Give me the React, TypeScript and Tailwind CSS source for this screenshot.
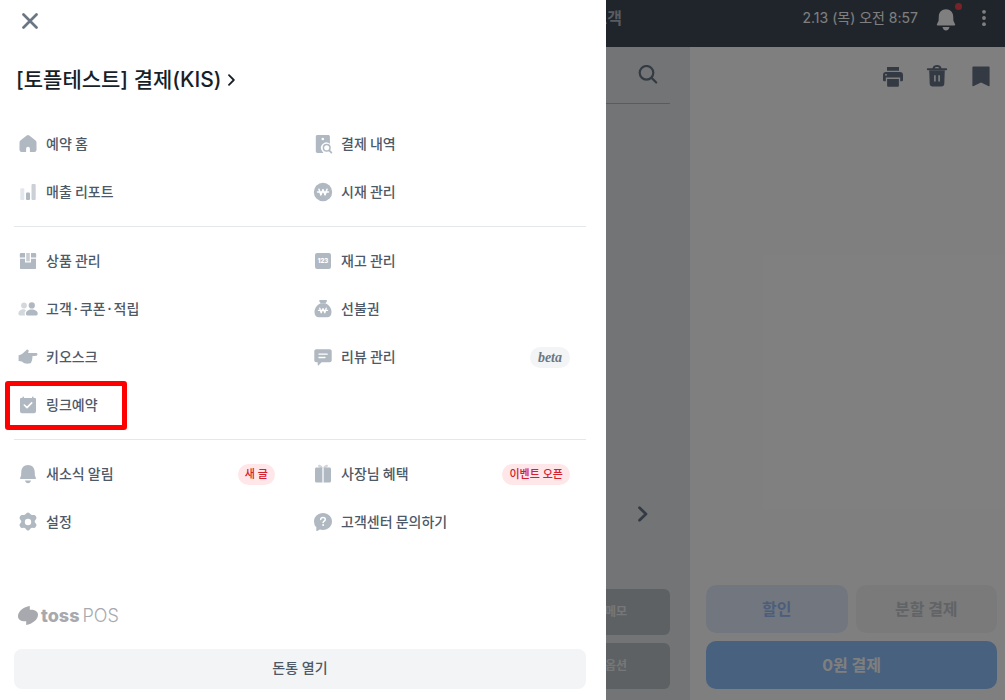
import type { ReactNode } from "react";
import clsx from "clsx";

type Badge = { label: string; tone: "red" | "beta" };
type MenuItem = { label: string; icon: ReactNode; badge?: Badge; marked?: boolean };

function Glyph({ children }: { children: ReactNode }) {
  return (
    <svg viewBox="0 0 20 20" className="size-5 shrink-0 fill-[#b0b8c1]" aria-hidden="true">
      {children}
    </svg>
  );
}

const HomeIcon = (
  <Glyph>
    <path d="M8.7 1.6a2.2 2.2 0 0 1 2.6 0l6 4.6c.8.6 1.2 1.4 1.2 2.4v7.2a2.2 2.2 0 0 1-2.2 2.2h-4.400v-3.300a1.900 1.900 0 0 0-3.800 0V18H3.700a2.200 2.200 0 0 1-2.200-2.200V8.600c0-1 .4-1.800 1.200-2.400z" />
  </Glyph>
);

const ReportIcon = (
  <Glyph>
    <rect x="2.300" y="6.300" width="4" height="11.700" rx="1" fill="#e3e6ea" />
    <rect x="8" y="10.400" width="4" height="7.600" rx="1" />
    <rect x="13.500" y="2" width="4.200" height="16" rx="1" fill="#cbd0d6" />
  </Glyph>
);

const HistoryIcon = (
  <Glyph>
    <path d="M4.500 1h10.700c1 0 1.700.7 1.700 1.700v7.100a5.400 5.400 0 0 0-7.700 7.500l1.200 1.700H4.500c-1 0-1.700-.7-1.700-1.700V2.700C2.800 1.700 3.500 1 4.500 1z" />
    <circle cx="9.800" cy="5" r="1.300" fill="#fff" />
    <circle cx="13.700" cy="13.800" r="3.300" fill="#fff" stroke="#b0b8c1" strokeWidth="1.500" />
    <path d="m16.200 16.300 2.200 2.300" stroke="#b0b8c1" strokeWidth="1.700" strokeLinecap="round" />
  </Glyph>
);

const CashIcon = (
  <Glyph>
    <circle cx="10" cy="10" r="9.200" />
    <path
      d="m6 7.200 1.900 5.700L10 7.600l2.100 5.300L14 7.200M4.500 10h11"
      fill="none"
      stroke="#fff"
      strokeWidth="1.500"
      strokeLinecap="round"
      strokeLinejoin="round"
    />
  </Glyph>
);

const ProductIcon = (
  <Glyph>
    <path d="M2.500 2H7v4.600H1.800V3zM13 2h4.500l.7 1v3.600H13z" />
    <path d="M8.200 2h3.600v8.300H8.200z" fill="#c8ced5" />
    <path d="M2 7.800h5v3.800h6V7.800h5v9.500c0 .4-.3.7-.7.7H2.700a.7.7 0 0 1-.7-.7z" />
  </Glyph>
);

const CustomerIcon = (
  <Glyph>
    <g fill="#d3d8dd">
      <circle cx="6" cy="6.500" r="2.900" />
      <path d="M6.600 10.400c-3.500-.3-6.200 1.500-6.200 4.300 0 1 .6 1.700 1.600 1.700h5.200c-1-1.600-.7-3.700.9-5.200z" />
    </g>
    <circle cx="13.800" cy="6.400" r="3.100" />
    <path d="M13.800 10.600c3.400 0 5.900 1.800 5.900 4.200 0 1-.6 1.700-1.600 1.700H9.500c-1 0-1.600-.7-1.600-1.700 0-2.400 2.500-4.200 5.900-4.200z" />
  </Glyph>
);

const KioskIcon = (
  <Glyph>
    <path d="M.6 8.200c1.800-.1 3-.8 4.300-1.900l3.600-3.400c1-.9 2.500.1 2.100 1.400l-.5 1.700h8c1.800 0 1.800 2.700.1 2.800l-4.100.4c.5.5.6 1.100.1 1.700.4.600.3 1.200-.2 1.700.3.700.1 1.300-.5 1.700 0 1.400-.9 2.200-2.300 2.300-3 .3-5.600-.2-7.200-2.100L.6 14z" />
  </Glyph>
);

const ReservationIcon = (
  <Glyph>
    <path d="M3.200 3h1.200V2c0-.8 1.500-.8 1.500 0v1h8.200V2c0-.8 1.500-.8 1.500 0v1h1.200c.7 0 1.200.5 1.200 1.200v12.100c0 1.200-.9 2-2 2H4c-1.200 0-2-.8-2-2V4.200C2 3.500 2.500 3 3.200 3z" />
    <path
      d="m6.300 10 2.700 2.600 4.700-4.700"
      fill="none"
      stroke="#fff"
      strokeWidth="1.600"
      strokeLinecap="round"
      strokeLinejoin="round"
    />
  </Glyph>
);

const StockIcon = (
  <Glyph>
    <rect x="2" y="2" width="16" height="16" rx="2.200" />
    <text
      x="10"
      y="12.400"
      textAnchor="middle"
      fill="#fff"
      className="font-['Inter'] text-[6px] font-black"
    >
      123
    </text>
  </Glyph>
);

const PrepaidIcon = (
  <Glyph>
    <path d="M6.200 1.600c0-.4.3-.7.700-.7h6.400c.4 0 .7.3.700.7 0 1.300-.8 1.900-1.600 2.700h-4.600c-.8-.8-1.600-1.400-1.600-2.700z" />
    <path d="M7.600 4.300h4.900c3.500 1.500 6 4.900 6 8.600 0 3.300-1.700 5.300-4.500 5.300H6c-2.800 0-4.500-2-4.500-5.300 0-3.700 2.500-7.100 6.100-8.600z" />
    <path
      d="m6.800 9.200 1.400 4.600L10 9.600l1.800 4.200 1.400-4.600M5.500 11.400h9"
      fill="none"
      stroke="#fff"
      strokeWidth="1.300"
      strokeLinecap="round"
      strokeLinejoin="round"
    />
  </Glyph>
);

const ReviewIcon = (
  <Glyph>
    <path d="M3.300 2.200h13.400c1.200 0 2 .9 2 2v9c0 1.200-.8 2-2 2H8.600l-2.900 3c-.4.400-1 .2-1-.4v-2.600H3.300c-1.200 0-2-.8-2-2v-9c0-1.100.8-2 2-2z" />
    <path d="M6 7.200h8.200M6 10.500h6" stroke="#fff" strokeWidth="1.300" strokeLinecap="round" />
  </Glyph>
);

const BellIcon = (
  <Glyph>
    <path d="M10 1c3.900 0 6.500 2.800 6.700 6.500l.2 4 1 2.600c.2.600-.1 1-.7 1H2.800c-.6 0-.9-.4-.7-1l1-2.600.2-4C3.500 3.800 6.100 1 10 1zM7 16.500h6c-.3 1.600-1.500 2.700-3 2.700s-2.700-1.100-3-2.700z" />
  </Glyph>
);

const BenefitIcon = (
  <Glyph>
    <path d="M10 4C7.400 3.900 5.400 3.300 5.100 1.900 4.900.8 6.200.5 7.200 1 8.500 1.500 9.500 2.800 10 4c.5-1.200 1.500-2.500 2.800-3 1-.5 2.300-.2 2.100.900C14.600 3.300 12.600 3.900 10 4z" fill="#d1d6db" />
    <path d="M9 3.500H3.500c-.9 0-1.500.6-1.500 1.500v12c0 .9.600 1.500 1.500 1.500H9zM11 3.500h5.500c.9 0 1.500.6 1.500 1.500v12c0 .9-.6 1.500-1.500 1.500H11z" />
    <path d="M9 3.500h2v15H9z" fill="#e1e4e8" />
  </Glyph>
);

const GearIcon = (
  <Glyph>
    <path
      fillRule="evenodd"
      d="M8.700 1.100a2 2 0 0 1 2.600 0l1.500 1.500c.3.300.8.500 1.200.5l2.100-.1c.7 0 1.300.4 1.600 1l.6 1.100c.3.600.2 1.300-.2 1.800l-1.200 1.800c-.3.500-.3 1 0 1.500l1.200 1.800c.4.600.5 1.200.2 1.800l-.7 1.200c-.3.600-.9.900-1.500.9l-2.100-.1c-.5 0-.9.200-1.200.5l-1.500 1.600a2 2 0 0 1-2.600 0l-1.500-1.600c-.3-.3-.8-.5-1.200-.5l-2.100.1c-.7 0-1.200-.3-1.500-.9l-.7-1.200c-.3-.6-.2-1.200.2-1.800l1.200-1.800c.3-.5.3-1 0-1.500L1.900 6.900c-.4-.5-.5-1.200-.2-1.800L2.400 4c.3-.6.8-1 1.500-1l2.100.1c.4 0 .9-.2 1.200-.5zM10 6.800a3.200 3.200 0 1 0 0 6.400 3.200 3.200 0 0 0 0-6.400z"
    />
  </Glyph>
);

const HelpIcon = (
  <Glyph>
    <path d="M10 1.100c5 0 9 3.600 9 8.400s-4 8.400-9 8.400c-1.100 0-2.200-.2-3.200-.5l-2.600 1.500c-.6.300-1.100 0-1-.6l.2-2.800A8.200 8.200 0 0 1 1 9.500c0-4.800 4-8.400 9-8.400z" />
    <path
      d="M7.700 7.500c.1-1.300 1-2 2.300-2s2.300.8 2.300 1.900c0 1.600-2.200 1.700-2.200 3.200"
      fill="none"
      stroke="#fff"
      strokeWidth="1.500"
      strokeLinecap="round"
    />
    <circle cx="10.100" cy="13" r="1" fill="#fff" />
  </Glyph>
);

// null keeps a grid cell empty
const SECTIONS: (MenuItem | null)[][] = [
  [
    { label: "예약 홈", icon: HomeIcon },
    { label: "결제 내역", icon: HistoryIcon },
    { label: "매출 리포트", icon: ReportIcon },
    { label: "시재 관리", icon: CashIcon },
  ],
  [
    { label: "상품 관리", icon: ProductIcon },
    { label: "재고 관리", icon: StockIcon },
    { label: "고객·쿠폰·적립", icon: CustomerIcon },
    { label: "선불권", icon: PrepaidIcon },
    { label: "키오스크", icon: KioskIcon },
    { label: "리뷰 관리", icon: ReviewIcon, badge: { label: "beta", tone: "beta" } },
    { label: "링크예약", icon: ReservationIcon, marked: true },
    null,
  ],
  [
    { label: "새소식 알림", icon: BellIcon, badge: { label: "새 글", tone: "red" } },
    { label: "사장님 혜택", icon: BenefitIcon, badge: { label: "이벤트 오픈", tone: "red" } },
    { label: "설정", icon: GearIcon },
    { label: "고객센터 문의하기", icon: HelpIcon },
  ],
];

function MenuBadge({ badge }: { badge: Badge }) {
  return (
    <span
      className={clsx(
        "ml-auto flex h-[21px] items-center rounded-full",
        badge.tone === "red"
          ? "bg-[#ffe7e9] px-[7px] text-[11px] font-medium text-[#d22030]"
          : "bg-[#f2f4f6] px-2 font-['Liberation_Serif',serif] text-[14px] font-bold text-[#6b7684] italic",
      )}
    >
      {badge.label}
    </span>
  );
}

function MenuButton({ item }: { item: MenuItem }) {
  return (
    <button type="button" className="relative flex h-12 w-full items-center gap-2 pr-4 pl-1 text-left">
      {item.icon}
      <span className="pb-[2px] font-['Noto_Sans_CJK_KR',sans-serif] text-[14px] leading-5 font-medium text-[#4e5968]">
        {item.label}
      </span>
      {item.badge && <MenuBadge badge={item.badge} />}
      {item.marked && (
        <span className="absolute top-0 -left-[9px] h-[49px] w-[122px] rounded-[3px] border-5 border-[#ff0000]" />
      )}
    </button>
  );
}

function Drawer() {
  return (
    <aside className="absolute inset-y-0 left-0 flex w-[606px] max-w-full flex-col bg-white pr-5 pb-[11px] pl-[14px]">
      <div className="flex h-[42px] items-center pl-2">
        <button type="button" aria-label="닫기">
          <svg viewBox="0 0 16 16" className="size-4" fill="none" stroke="#6b7684" strokeWidth="2.700" strokeLinecap="round">
            <path d="m1.500 1.500 13 13M14.500 1.500l-13 13" />
          </svg>
        </button>
      </div>

      <button type="button" className="mt-5 flex h-9 items-center gap-1.5 self-start pl-[2px]">
        <span className="text-[21px] font-medium text-[#191f28]">[토플테스트] 결제(KIS)</span>
        <svg viewBox="0 0 7 12" className="h-3 w-[7px]" fill="none" stroke="#191f28" strokeWidth="1.800" strokeLinecap="round" strokeLinejoin="round">
          <path d="m1 1.200 4.800 4.800L1 10.800" />
        </svg>
      </button>

      <nav className="mt-[22px]">
        {SECTIONS.map((items, index) => (
          <ul
            key={index}
            className={clsx(
              "grid grid-cols-2 gap-x-[18px]",
              index > 0 && "mt-[10px] border-t border-[#e5e8eb] pt-[10px]",
            )}
          >
            {items.map((item, i) => (
              <li key={item?.label ?? i}>{item && <MenuButton item={item} />}</li>
            ))}
          </ul>
        ))}
      </nav>

      <div className="mt-auto mb-[22px] flex h-6 items-center gap-[3px] pl-1 text-[18px] text-[#a7a9ae]">
        <svg viewBox="0 0 20 19" className="h-[19px] w-5" fill="currentColor" aria-hidden="true">
          <path d="M11.800 0v3.800C16 3.400 20 4.800 20 8.800c0 5-5.700 9.200-11.800 10.200v-3.800C4 15.600 0 14.200 0 10.200 0 5.200 5.700 1 11.800 0z" />
        </svg>
        <span className="font-extrabold">toss</span>
        <span className="font-light">POS</span>
      </div>

      <button type="button" className="h-10 rounded-lg bg-[#f2f4f6] pb-[2px] text-[14px] leading-5 font-medium text-[#4e5968]">
        돈통 열기
      </button>
    </aside>
  );
}

function TopBar() {
  return (
    <header className="flex h-[47px] shrink-0 items-start justify-between bg-[#414a57] pr-4 text-white">
      <nav className="flex h-9 w-[622px] items-center justify-end text-[16px] font-bold text-[#b0b8c1]">고객</nav>
      <div className="flex h-9 items-center">
        <time className="text-[14px] leading-5">2.13 (목) 오전 8:57</time>
        <button type="button" aria-label="알림" className="relative mt-1 ml-[18px]">
          <svg viewBox="0 0 20 22" className="h-[22px] w-5" fill="currentColor">
            <path d="M10 .3c4.300 0 7 3 7.200 7l.2 4.500 1.700 3.400c.3.700 0 1.200-.7 1.200H1.600c-.7 0-1-.5-.7-1.200l1.700-3.400.2-4.500C3 3.300 5.700.3 10 .3zM6.500 18h7c-.3 1.900-1.700 3.400-3.500 3.400S6.800 19.900 6.500 18z" />
          </svg>
          <span className="absolute -top-1.5 -right-1.5 size-[7px] rounded-full bg-[#f04452]" />
        </button>
        <button type="button" aria-label="더보기" className="ml-[23px]">
          <svg viewBox="0 0 10 20" className="h-5 w-[10px]" fill="currentColor">
            <circle cx="5" cy="3.800" r="1.900" />
            <circle cx="5" cy="10" r="1.900" />
            <circle cx="5" cy="16.200" r="1.900" />
          </svg>
        </button>
      </div>
    </header>
  );
}

function CartPanel() {
  return (
    <section className="flex flex-1 flex-col items-end bg-[#e5e8eb] pr-5 pb-[11px]">
      <label className="flex h-[57px] w-full items-center border-b border-[#b0b8c1] pr-3">
        <input type="search" aria-label="검색" className="min-w-0 flex-1 bg-transparent outline-none" />
        <svg viewBox="0 0 20 20" className="size-5" fill="none" stroke="#677587" strokeWidth="2.200" strokeLinecap="round">
          <circle cx="8.500" cy="7.800" r="6.800" />
          <path d="m13.600 12.900 4.600 4.600" />
        </svg>
      </label>
      <button type="button" aria-label="다음" className="mt-auto mr-[21px]">
        <svg viewBox="0 0 12 16" className="h-4 w-3" fill="none" stroke="#677587" strokeWidth="2.700" strokeLinecap="round" strokeLinejoin="round">
          <path d="m2.500 1.700 6.500 6.300-6.500 6.300" />
        </svg>
      </button>
      <div className="mt-[67px] flex w-[108px] flex-col gap-2 text-[12px] font-bold text-[#eceef0]">
        <button type="button" className="h-[46px] rounded-md bg-[#bac2c6]">메모</button>
        <button type="button" className="h-[46px] rounded-md bg-[#bac2c6]">옵션</button>
      </div>
    </section>
  );
}

function PaymentPanel() {
  return (
    <section className="flex w-[315px] flex-col justify-between bg-white pt-[18px] pr-2 pb-[11px] pl-4 text-[#677587]">
      <div className="flex items-center justify-end gap-[22px] pr-[5px]">
        <button type="button" aria-label="인쇄">
          <svg viewBox="0 0 22 22" className="size-[22px]" fill="currentColor">
            <path d="M5 2h12v3.800H5zM4 7h14a3 3 0 0 1 3 3v5.100a1.200 1.200 0 0 1-1.200 1.200h-1.600v-3.700H3.800v3.700H2.200A1.200 1.200 0 0 1 1 15.100V10a3 3 0 0 1 3-3zm-1 2.300v1.300h2V9.300z" fillRule="evenodd" />
            <path d="M5.100 13.900h11.800v6.500c0 .8-.5 1.300-1.300 1.300H6.400c-.8 0-1.300-.5-1.300-1.300z" />
          </svg>
        </button>
        <button type="button" aria-label="삭제">
          <svg viewBox="0 0 22 22" className="size-[22px]" fill="currentColor" fillRule="evenodd">
            <path d="M6.500 3.200C6.900 1.100 8.600 0 11 0s4.100 1.100 4.500 3.200h4.700a1 1 0 0 1 0 2H1.800a1 1 0 0 1 0-2zm2.100 0h4.800c-.4-.8-1.200-1.200-2.400-1.200s-2 .4-2.400 1.200zM3.200 5h15.600l-.5 13.800c-.1 1.700-1.100 2.700-2.800 2.700h-9c-1.700 0-2.700-1-2.800-2.700zm4.900 5.200v6.400h1.600v-6.400zm4.200 0v6.400h1.600v-6.400z" />
          </svg>
        </button>
        <button type="button" aria-label="저장">
          <svg viewBox="0 0 22 22" className="size-[22px]" fill="currentColor">
            <path d="M3.200 1.500h15.600c.5 0 .8.3.8.8v18.400c0 .5-.4.700-.8.500L11 17.400l-7.800 3.800c-.4.200-.8 0-.8-.5V2.300c0-.5.3-.8.800-.8z" />
          </svg>
        </button>
      </div>
      <div className="grid grid-cols-2 gap-2 text-[16px] font-bold">
        <button type="button" className="h-12 rounded-[10px] bg-[#e5eeff] text-[#98bcf5]">할인</button>
        <button type="button" className="h-12 rounded-[10px] bg-[#f4f5f7] text-[#c3c7cc]">분할 결제</button>
        <button type="button" className="col-span-2 h-12 rounded-[10px] bg-[#90c2ff] text-white">0원 결제</button>
      </div>
    </section>
  );
}

export default function App() {
  return (
    <div className="relative flex h-screen flex-col overflow-hidden font-['Inter','Noto_Sans_CJK_KR',sans-serif]">
      <TopBar />
      <main className="flex min-h-0 flex-1">
        <CartPanel />
        <PaymentPanel />
      </main>
      <div className="absolute inset-0 bg-black/50" />
      <Drawer />
    </div>
  );
}
